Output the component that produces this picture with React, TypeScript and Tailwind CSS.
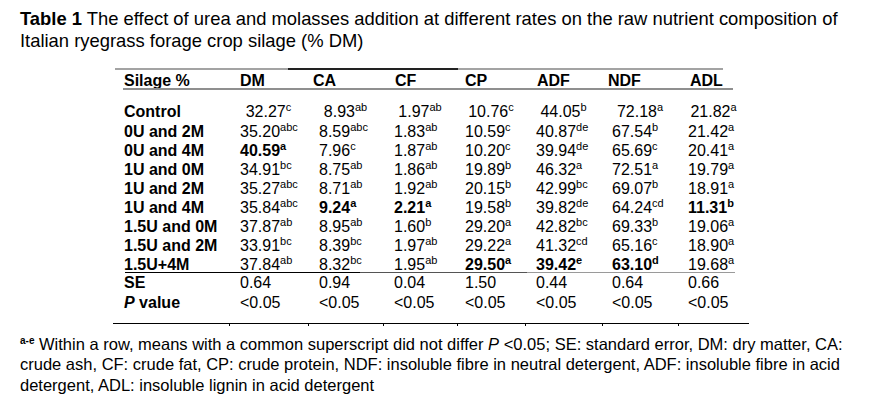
import React from "react";

type Cell = [string, string, boolean?];

const rows: { label: string; cells: Cell[] }[] = [
  { label: "0U and 2M", cells: [["35.20", "abc"], ["8.59", "abc"], ["1.83", "ab"], ["10.59", "c"], ["40.87", "de"], ["67.54", "b"], ["21.42", "a"]] },
  { label: "0U and 4M", cells: [["40.59", "a", true], ["7.96", "c"], ["1.87", "ab"], ["10.20", "c"], ["39.94", "de"], ["65.69", "c"], ["20.41", "a"]] },
  { label: "1U and 0M", cells: [["34.91", "bc"], ["8.75", "ab"], ["1.86", "ab"], ["19.89", "b"], ["46.32", "a"], ["72.51", "a"], ["19.79", "a"]] },
  { label: "1U and 2M", cells: [["35.27", "abc"], ["8.71", "ab"], ["1.92", "ab"], ["20.15", "b"], ["42.99", "bc"], ["69.07", "b"], ["18.91", "a"]] },
  { label: "1U and 4M", cells: [["35.84", "abc"], ["9.24", "a", true], ["2.21", "a", true], ["19.58", "b"], ["39.82", "de"], ["64.24", "cd"], ["11.31", "b", true]] },
  { label: "1.5U and 0M", cells: [["37.87", "ab"], ["8.95", "ab"], ["1.60", "b"], ["29.20", "a"], ["42.82", "bc"], ["69.33", "b"], ["19.06", "a"]] },
  { label: "1.5U and 2M", cells: [["33.91", "bc"], ["8.39", "bc"], ["1.97", "ab"], ["29.22", "a"], ["41.32", "cd"], ["65.16", "c"], ["18.90", "a"]] },
  { label: "1.5U+4M", cells: [["37.84", "ab"], ["8.32", "bc"], ["1.95", "ab"], ["29.50", "a", true], ["39.42", "e", true], ["63.10", "d", true], ["19.68", "a"]] },
];

const control: Cell[] = [["32.27", "c"], ["8.93", "ab"], ["1.97", "ab"], ["10.76", "c"], ["44.05", "b"], ["72.18", "a"], ["21.82", "a"]];

const heads = ["DM", "CA", "CF", "CP", "ADF", "NDF", "ADL"];
const headPad = ["pl-[11px]", "pl-[5px]", "pl-[12px]", "pl-[8px]", "pl-[12px]", "pl-[6px]", "pl-[12px]"];
const dataPad = ["pl-[11px]", "pl-[11px]", "pl-[11px]", "pl-[8px]", "pl-[11px]", "pl-[10px]", "pl-[10px]"];
const se = ["0.64", "0.94", "0.04", "1.50", "0.44", "0.64", "0.66"];

const GRID = "grid grid-cols-[116px_79px_75px_74px_68px_77px_76px_71px]";

function Val({ c }: { c: Cell }) {
  return (
    <span className={c[2] ? "font-bold" : ""}>
      {c[0]}
      <span className="text-[11px] align-[6px] leading-none">{c[1]}</span>
    </span>
  );
}

export default function App() {
  return (
    <div
      className="w-[874px] h-[403px] bg-white text-black pl-[20px] pt-[8px] overflow-hidden"
      style={{ fontFamily: '"Liberation Sans", Arial, sans-serif' }}
    >
      <div className="text-[18.4px] leading-[21.5px] whitespace-nowrap">
        <div>
          <span className="font-bold">Table 1</span> The effect of urea and molasses addition at different rates on the raw nutrient composition of
        </div>
        <div>Italian ryegrass forage crop silage (% DM)</div>
      </div>

      <div className="ml-[93px] w-[636px] mt-[17px] text-[16px]">
        {/* top rule */}
        <div className="flex h-[2px]">
          <div className="ml-[2px] w-[173px] bg-[#a3a3a3]" />
          <div className="w-[170px] bg-[#222]" />
          <div className="w-[265px] bg-[#a3a3a3]" />
        </div>
        {/* header */}
        <div className={`${GRID} h-[18px] leading-[21px] font-bold`}>
          <div className="pl-[11px]">Silage %</div>
          {heads.map((h, i) => (
            <div key={h} className={headPad[i]}>
              {h}
            </div>
          ))}
        </div>
        <div className="flex h-[2px]">
          <div className="ml-[10px] w-[610px] bg-[#8f8f8f]" />
        </div>

        {/* control */}
        <div className={`${GRID} mt-[12px] h-[20px] leading-[19px]`}>
          <div className="pl-[11px] font-bold">Control</div>
          {control.map((c, i) => (
            <div key={i} className="text-center">
              <Val c={c} />
            </div>
          ))}
        </div>
        {rows.map((r, ri) => (
          <div
            key={r.label}
            className={`${GRID} ${ri === rows.length - 1 ? "h-[17px]" : "h-[19px]"} leading-[19px] whitespace-nowrap`}
          >
            <div className="pl-[11px] font-bold">{r.label}</div>
            {r.cells.map((c, i) => (
              <div key={i} className={dataPad[i]}>
                <Val c={c} />
              </div>
            ))}
          </div>
        ))}
        {/* rule above SE */}
        <div className="flex h-[1px]">
          <div className="ml-[12px] w-[235px] bg-black" />
          <div className="w-[167px] bg-[#555]" />
          <div className="w-[208px] bg-[#9a9a9a]" />
        </div>
        <div className={`${GRID} h-[20px] leading-[19px]`}>
          <div className="pl-[11px] font-bold">SE</div>
          {se.map((v, i) => (
            <div key={i} className={dataPad[i]}>
              {v}
            </div>
          ))}
        </div>
        <div className={`${GRID} h-[19px] leading-[19px]`}>
          <div className="pl-[11px] font-bold">
            <span className="italic">P</span> value
          </div>
          {se.map((_, i) => (
            <div key={i} className={dataPad[i]}>
              &lt;0.05
            </div>
          ))}
        </div>
        {/* bottom rule with ticks */}
        <div className={`${GRID} mt-[11px] h-[3px]`}>
          <div className="border-t border-black" />
          {heads.map((h) => (
            <div key={h} className="border-t border-l border-black" />
          ))}
        </div>
      </div>

      <div className="mt-[7.5px] text-[16.5px] leading-[20.5px] whitespace-nowrap">
        <div>
          <span className="font-bold text-[10px] align-[6px] leading-none">a-e</span> Within a row, means with a common superscript did not differ{" "}
          <span className="italic">P</span> &lt;0.05; SE: standard error, DM: dry matter, CA:
        </div>
        <div>crude ash, CF: crude fat, CP: crude protein, NDF: insoluble fibre in neutral detergent, ADF: insoluble fibre in acid</div>
        <div>detergent, ADL: insoluble lignin in acid detergent</div>
      </div>
    </div>
  );
}
